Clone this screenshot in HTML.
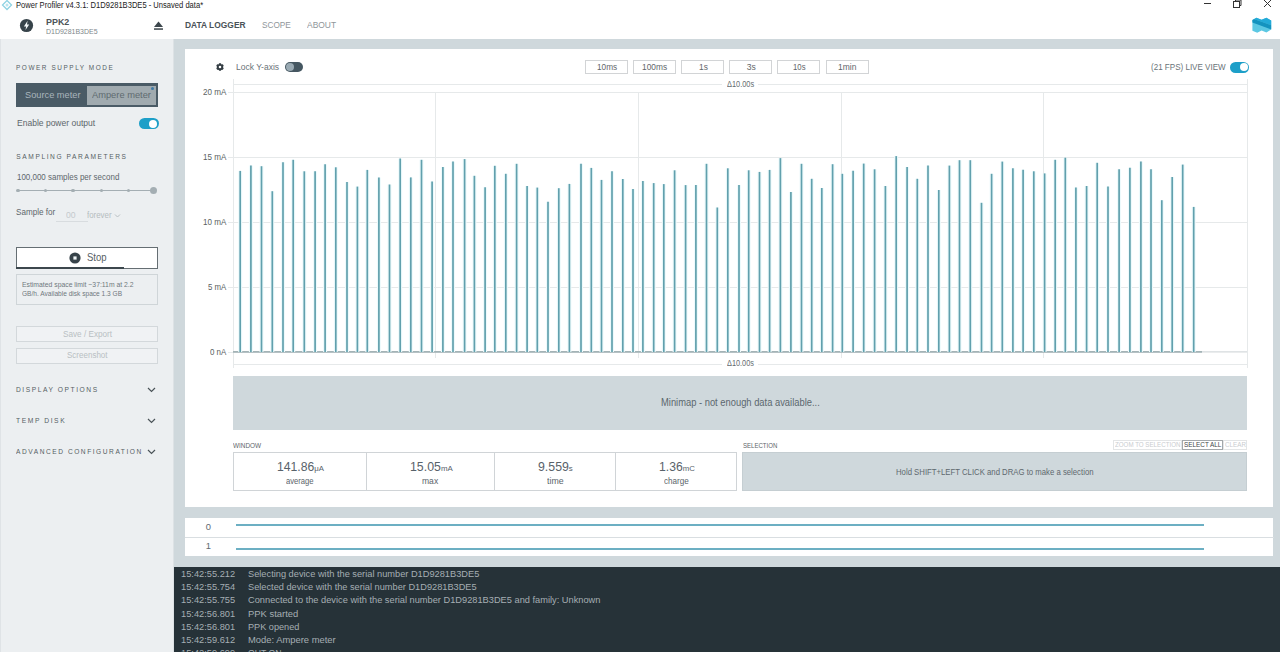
<!DOCTYPE html>
<html><head><meta charset="utf-8">
<style>
*{box-sizing:border-box;margin:0;padding:0}
html,body{width:1280px;height:652px;overflow:hidden;background:#cfd8dc;font-family:"Liberation Sans",sans-serif;position:relative}
.a{position:absolute}
.x{position:absolute;white-space:nowrap;line-height:1px;height:1px;transform-origin:0 0}
.x small{font-size:64%}
#hdr{left:0;top:0;width:1280px;height:39px;background:#fff}
#side{left:0;top:39px;width:174px;height:613px;background:#eceff1;border-left:1px solid #dfe3e6;border-right:1px solid #dde2e5}
#card{left:185px;top:49px;width:1088px;height:458px;background:#fff}
#dig{left:185px;top:518px;width:1088px;height:38px;background:#fff}
#log{left:174px;top:567px;width:1106px;height:85px;background:#263238}
.tb{position:absolute;height:13.5px;width:43px;border:1px solid #d2d4d6}
.stat{position:absolute;top:452px;height:39px;border:1px solid #d0d4d7}
</style></head><body>
<!-- header -->
<div id="hdr" class="a"></div>
<svg class="a" style="left:1px;top:0" width="12" height="11" viewBox="0 0 12 11"><path d="M6 0.5 L10.5 5 L6 9.5 L1.5 5 Z" fill="none" stroke="#8fd3e3" stroke-width="1.3"/><circle cx="6" cy="5" r="1.5" fill="#b9e4ee"/></svg>
<svg class="a" style="left:1200px;top:0" width="80" height="10"><line x1="4" y1="3.5" x2="11" y2="3.5" stroke="#333" stroke-width="1"/><rect x="33.5" y="1.5" width="6" height="6" fill="none" stroke="#333" stroke-width="1"/><path d="M35.5 1.5 V0 H41 V5.5 H39.5" fill="none" stroke="#333" stroke-width="1"/><path d="M64 0 L71 7 M71 0 L64 7" stroke="#333" stroke-width="1"/></svg>
<svg class="a" style="left:18.65px;top:17.6px" width="15" height="15" viewBox="0 0 15 15"><circle cx="7.5" cy="7.5" r="6.6" fill="#37434a"/><path d="M8.6 2.8 L4.9 8.4 H7.1 L6.5 12.1 L10.2 6.6 H8 Z" fill="#f4f8f9"/></svg>
<svg class="a" style="left:153px;top:20px" width="11" height="11" viewBox="0 0 11 11"><path d="M5.5 1.5 L10 7 H1 Z" fill="#3c464c"/><rect x="1" y="8.3" width="9" height="1.5" fill="#3c464c"/></svg>
<svg class="a" style="left:1248px;top:12px" width="28" height="26" viewBox="0 0 28 26"><defs><clipPath id="nl"><path d="M4.4 8 L8.4 5.8 L13.6 7.8 L18.4 5.8 L23.2 8.6 V17.6 L18.4 20.4 L13.6 18.4 L9.2 20.8 L4.4 18.8 Z"/></clipPath></defs><g clip-path="url(#nl)"><rect x="0" y="0" width="28" height="26" fill="#5cc8e3"/><path d="M0 0 H28 V14.8 L4.4 6.6 H0 Z" fill="#23aad8"/><path d="M0 6.6 L4.4 6.6 L28 14.8 V19.4 L4.4 10.4 H0 Z" fill="#1493bf"/></g></svg>

<!-- sidebar -->
<div id="side" class="a"></div>
<div class="a" style="left:16px;top:83px;width:142px;height:24px;background:#4a5b66"></div>
<div class="a" style="left:87px;top:86px;width:68.5px;height:18.6px;background:#a0aaaf"></div>
<div class="a" style="left:151px;top:87px;width:3px;height:3px;border-radius:50%;background:#3f7aa6"></div>
<div class="a" style="left:139px;top:118px;width:19.5px;height:11px;border-radius:6px;background:#1d9fc8"></div>
<div class="a" style="left:148.5px;top:119.5px;width:8px;height:8px;border-radius:50%;background:#fff"></div>
<div class="a" style="left:18px;top:189.5px;width:136px;height:1.2px;background:#a4aeb3"></div>
<div class="a" style="left:16.3px;top:188.6px;width:3.4px;height:3.4px;border-radius:50%;background:#a4aeb3"></div>
<div class="a" style="left:43.8px;top:188.6px;width:3.4px;height:3.4px;border-radius:50%;background:#a4aeb3"></div>
<div class="a" style="left:71.4px;top:188.6px;width:3.4px;height:3.4px;border-radius:50%;background:#a4aeb3"></div>
<div class="a" style="left:99.5px;top:188.6px;width:3.4px;height:3.4px;border-radius:50%;background:#a4aeb3"></div>
<div class="a" style="left:126.9px;top:188.6px;width:3.4px;height:3.4px;border-radius:50%;background:#a4aeb3"></div>
<div class="a" style="left:150.4px;top:186.9px;width:7px;height:7px;border-radius:50%;background:#a4aeb3"></div>
<div class="a" style="left:56px;top:221px;width:32px;height:1px;background:#d8dcdf"></div>
<svg class="a" style="left:114px;top:213px" width="7" height="6"><path d="M1 1.5 L3.5 4 L6 1.5" fill="none" stroke="#b9c0c4" stroke-width="1"/></svg>
<div class="a" style="left:16px;top:247px;width:142px;height:22px;background:#fff;border:1px solid #656e73"></div>
<div class="a" style="left:16px;top:266.5px;width:108px;height:2px;background:#3c474d"></div>
<svg class="a" style="left:69px;top:252px" width="12" height="12"><circle cx="6" cy="6" r="5.6" fill="#37434a"/><rect x="4.4" y="4.4" width="3.2" height="3.2" fill="#f0f6f7"/></svg>
<div class="a" style="left:16px;top:274px;width:142px;height:31px;border:1px solid #cfd5d8"></div>
<div class="a" style="left:16px;top:326px;width:142px;height:16px;border:1px solid #d3d8db;background:#f0f2f4"></div>
<div class="a" style="left:16px;top:348px;width:142px;height:16px;border:1px solid #d3d8db;background:#f0f2f4"></div>
<svg class="a" style="left:147px;top:387px" width="9" height="6"><path d="M1 1 L4.5 4.5 L8 1" fill="none" stroke="#4a5358" stroke-width="1.2"/></svg>
<svg class="a" style="left:147px;top:418px" width="9" height="6"><path d="M1 1 L4.5 4.5 L8 1" fill="none" stroke="#4a5358" stroke-width="1.2"/></svg>
<svg class="a" style="left:147px;top:449px" width="9" height="6"><path d="M1 1 L4.5 4.5 L8 1" fill="none" stroke="#4a5358" stroke-width="1.2"/></svg>

<!-- main card -->
<div id="card" class="a"></div>
<svg class="a" style="left:210.2px;top:57.1px" width="20" height="20" viewBox="0 0 20 20"><path fill="#333d43" fill-rule="evenodd" d="M8.46 7.54 L9.12 6.20 L10.88 6.20 L11.54 7.54 L11.36 7.44 L12.85 7.34 L13.73 8.86 L12.90 10.10 L12.90 9.90 L13.73 11.14 L12.85 12.66 L11.36 12.56 L11.54 12.46 L10.88 13.80 L9.12 13.80 L8.46 12.46 L8.64 12.56 L7.15 12.66 L6.27 11.14 L7.10 9.90 L7.10 10.10 L6.27 8.86 L7.15 7.34 L8.64 7.44 Z M11.30 10 A1.3 1.3 0 1 0 8.70 10 A1.3 1.3 0 1 0 11.30 10 Z"/></svg>
<div class="a" style="left:284.5px;top:62px;width:18.5px;height:10px;border-radius:5px;background:#455761"></div>
<div class="a" style="left:285.5px;top:63px;width:8px;height:8px;border-radius:50%;background:#9aaab3"></div>
<div class="tb" style="left:584.5px;top:60px"></div>
<div class="tb" style="left:632.8px;top:60px"></div>
<div class="tb" style="left:681px;top:60px"></div>
<div class="tb" style="left:729.2px;top:60px"></div>
<div class="tb" style="left:777.4px;top:60px"></div>
<div class="tb" style="left:825.6px;top:60px"></div>
<div class="a" style="left:1229.5px;top:61.5px;width:19px;height:11px;border-radius:6px;background:#1d9fc8"></div>
<div class="a" style="left:1239.5px;top:63px;width:8px;height:8px;border-radius:50%;background:#fff"></div>

<svg class="a" style="left:0;top:0" width="1280" height="652">
 <g stroke="#e6e9ea" stroke-width="1" shape-rendering="crispEdges">
  <line x1="233" y1="84.5" x2="722" y2="84.5"/><line x1="758" y1="84.5" x2="1247" y2="84.5"/>
  <line x1="233" y1="92.5" x2="1247" y2="92.5"/>
  <line x1="233" y1="157.5" x2="1247" y2="157.5"/>
  <line x1="233" y1="222.5" x2="1247" y2="222.5"/>
  <line x1="233" y1="287.5" x2="1247" y2="287.5"/>
  <line x1="233" y1="364.5" x2="722" y2="364.5"/><line x1="758" y1="364.5" x2="1247" y2="364.5"/>
  <line x1="435.5" y1="92" x2="435.5" y2="358"/>
  <line x1="638.5" y1="92" x2="638.5" y2="358"/>
  <line x1="841.5" y1="92" x2="841.5" y2="358"/>
  <line x1="1043.5" y1="92" x2="1043.5" y2="358"/>
  <line x1="1247.5" y1="79" x2="1247.5" y2="368"/>
  <line x1="233.5" y1="79" x2="233.5" y2="368"/>
  <line x1="228" y1="92.5" x2="233" y2="92.5"/>
  <line x1="228" y1="157.5" x2="233" y2="157.5"/>
  <line x1="228" y1="222.5" x2="233" y2="222.5"/>
  <line x1="228" y1="287.5" x2="233" y2="287.5"/>
  <line x1="228" y1="352.5" x2="233" y2="352.5"/>
 </g>
 <line x1="233" y1="351.9" x2="1247" y2="351.9" stroke="#d5dadc" stroke-width="1.2"/>
 <line x1="233" y1="351.9" x2="1202" y2="351.9" stroke="#a3b3b6" stroke-width="1.6"/>
 <g stroke="#edfafc" stroke-width="4"><line x1="240.2" y1="352" x2="240.2" y2="170.9"/><line x1="250.9" y1="352" x2="250.9" y2="165.6"/><line x1="261.5" y1="352" x2="261.5" y2="166.2"/><line x1="272.3" y1="352" x2="272.3" y2="191.2"/><line x1="283.0" y1="352" x2="283.0" y2="162.2"/><line x1="293.2" y1="352" x2="293.2" y2="159.8"/><line x1="304.3" y1="352" x2="304.3" y2="171.3"/><line x1="315.1" y1="352" x2="315.1" y2="171.3"/><line x1="325.1" y1="352" x2="325.1" y2="164.2"/><line x1="335.8" y1="352" x2="335.8" y2="167.3"/><line x1="347.0" y1="352" x2="347.0" y2="182.1"/><line x1="357.4" y1="352" x2="357.4" y2="186.6"/><line x1="367.3" y1="352" x2="367.3" y2="169.9"/><line x1="378.9" y1="352" x2="378.9" y2="177.4"/><line x1="389.5" y1="352" x2="389.5" y2="184.5"/><line x1="400.2" y1="352" x2="400.2" y2="158.5"/><line x1="410.8" y1="352" x2="410.8" y2="177.4"/><line x1="421.5" y1="352" x2="421.5" y2="159.8"/><line x1="432.1" y1="352" x2="432.1" y2="181.5"/><line x1="442.9" y1="352" x2="442.9" y2="166.9"/><line x1="453.0" y1="352" x2="453.0" y2="161.6"/><line x1="464.6" y1="352" x2="464.6" y2="159.1"/><line x1="474.4" y1="352" x2="474.4" y2="175.8"/><line x1="485.1" y1="352" x2="485.1" y2="187.2"/><line x1="494.8" y1="352" x2="494.8" y2="165.8"/><line x1="505.8" y1="352" x2="505.8" y2="173.8"/><line x1="516.6" y1="352" x2="516.6" y2="163.8"/><line x1="527.1" y1="352" x2="527.1" y2="186.0"/><line x1="537.3" y1="352" x2="537.3" y2="187.6"/><line x1="548.0" y1="352" x2="548.0" y2="201.8"/><line x1="558.8" y1="352" x2="558.8" y2="188.2"/><line x1="569.4" y1="352" x2="569.4" y2="183.9"/><line x1="581.0" y1="352" x2="581.0" y2="163.8"/><line x1="591.3" y1="352" x2="591.3" y2="167.9"/><line x1="601.5" y1="352" x2="601.5" y2="179.9"/><line x1="612.0" y1="352" x2="612.0" y2="171.3"/><line x1="622.8" y1="352" x2="622.8" y2="179.0"/><line x1="633.0" y1="352" x2="633.0" y2="189.0"/><line x1="642.9" y1="352" x2="642.9" y2="180.9"/><line x1="653.7" y1="352" x2="653.7" y2="183.1"/><line x1="663.8" y1="352" x2="663.8" y2="184.1"/><line x1="674.6" y1="352" x2="674.6" y2="170.3"/><line x1="685.6" y1="352" x2="685.6" y2="185.1"/><line x1="695.9" y1="352" x2="695.9" y2="184.9"/><line x1="706.5" y1="352" x2="706.5" y2="163.8"/><line x1="717.3" y1="352" x2="717.3" y2="207.5"/><line x1="727.8" y1="352" x2="727.8" y2="168.3"/><line x1="739.0" y1="352" x2="739.0" y2="185.1"/><line x1="748.7" y1="352" x2="748.7" y2="170.3"/><line x1="759.5" y1="352" x2="759.5" y2="171.9"/><line x1="769.6" y1="352" x2="769.6" y2="169.9"/><line x1="780.4" y1="352" x2="780.4" y2="158.1"/><line x1="790.9" y1="352" x2="790.9" y2="192.0"/><line x1="801.5" y1="352" x2="801.5" y2="163.8"/><line x1="811.7" y1="352" x2="811.7" y2="178.8"/><line x1="821.8" y1="352" x2="821.8" y2="188.0"/><line x1="832.6" y1="352" x2="832.6" y2="164.2"/><line x1="842.3" y1="352" x2="842.3" y2="173.8"/><line x1="853.1" y1="352" x2="853.1" y2="170.7"/><line x1="863.7" y1="352" x2="863.7" y2="163.6"/><line x1="874.6" y1="352" x2="874.6" y2="169.3"/><line x1="885.4" y1="352" x2="885.4" y2="186.0"/><line x1="896.2" y1="352" x2="896.2" y2="156.1"/><line x1="907.1" y1="352" x2="907.1" y2="166.9"/><line x1="917.3" y1="352" x2="917.3" y2="178.8"/><line x1="928.0" y1="352" x2="928.0" y2="165.6"/><line x1="938.8" y1="352" x2="938.8" y2="190.0"/><line x1="949.4" y1="352" x2="949.4" y2="165.6"/><line x1="959.5" y1="352" x2="959.5" y2="160.2"/><line x1="970.3" y1="352" x2="970.3" y2="160.2"/><line x1="981.5" y1="352" x2="981.5" y2="202.8"/><line x1="991.6" y1="352" x2="991.6" y2="173.8"/><line x1="1002.3" y1="352" x2="1002.3" y2="161.6"/><line x1="1012.9" y1="352" x2="1012.9" y2="168.3"/><line x1="1023.1" y1="352" x2="1023.1" y2="169.7"/><line x1="1033.8" y1="352" x2="1033.8" y2="171.3"/><line x1="1044.6" y1="352" x2="1044.6" y2="173.4"/><line x1="1055.2" y1="352" x2="1055.2" y2="159.8"/><line x1="1065.3" y1="352" x2="1065.3" y2="157.7"/><line x1="1075.9" y1="352" x2="1075.9" y2="187.6"/><line x1="1086.6" y1="352" x2="1086.6" y2="186.0"/><line x1="1097.2" y1="352" x2="1097.2" y2="162.8"/><line x1="1108.0" y1="352" x2="1108.0" y2="186.6"/><line x1="1119.1" y1="352" x2="1119.1" y2="169.3"/><line x1="1129.9" y1="352" x2="1129.9" y2="167.7"/><line x1="1140.9" y1="352" x2="1140.9" y2="161.6"/><line x1="1151.0" y1="352" x2="1151.0" y2="169.3"/><line x1="1161.8" y1="352" x2="1161.8" y2="200.2"/><line x1="1172.2" y1="352" x2="1172.2" y2="177.0"/><line x1="1182.7" y1="352" x2="1182.7" y2="164.6"/><line x1="1193.7" y1="352" x2="1193.7" y2="206.9"/></g>
 <g stroke="#61a0ad" stroke-width="1.7"><line x1="240.2" y1="352" x2="240.2" y2="170.9"/><line x1="250.9" y1="352" x2="250.9" y2="165.6"/><line x1="261.5" y1="352" x2="261.5" y2="166.2"/><line x1="272.3" y1="352" x2="272.3" y2="191.2"/><line x1="283.0" y1="352" x2="283.0" y2="162.2"/><line x1="293.2" y1="352" x2="293.2" y2="159.8"/><line x1="304.3" y1="352" x2="304.3" y2="171.3"/><line x1="315.1" y1="352" x2="315.1" y2="171.3"/><line x1="325.1" y1="352" x2="325.1" y2="164.2"/><line x1="335.8" y1="352" x2="335.8" y2="167.3"/><line x1="347.0" y1="352" x2="347.0" y2="182.1"/><line x1="357.4" y1="352" x2="357.4" y2="186.6"/><line x1="367.3" y1="352" x2="367.3" y2="169.9"/><line x1="378.9" y1="352" x2="378.9" y2="177.4"/><line x1="389.5" y1="352" x2="389.5" y2="184.5"/><line x1="400.2" y1="352" x2="400.2" y2="158.5"/><line x1="410.8" y1="352" x2="410.8" y2="177.4"/><line x1="421.5" y1="352" x2="421.5" y2="159.8"/><line x1="432.1" y1="352" x2="432.1" y2="181.5"/><line x1="442.9" y1="352" x2="442.9" y2="166.9"/><line x1="453.0" y1="352" x2="453.0" y2="161.6"/><line x1="464.6" y1="352" x2="464.6" y2="159.1"/><line x1="474.4" y1="352" x2="474.4" y2="175.8"/><line x1="485.1" y1="352" x2="485.1" y2="187.2"/><line x1="494.8" y1="352" x2="494.8" y2="165.8"/><line x1="505.8" y1="352" x2="505.8" y2="173.8"/><line x1="516.6" y1="352" x2="516.6" y2="163.8"/><line x1="527.1" y1="352" x2="527.1" y2="186.0"/><line x1="537.3" y1="352" x2="537.3" y2="187.6"/><line x1="548.0" y1="352" x2="548.0" y2="201.8"/><line x1="558.8" y1="352" x2="558.8" y2="188.2"/><line x1="569.4" y1="352" x2="569.4" y2="183.9"/><line x1="581.0" y1="352" x2="581.0" y2="163.8"/><line x1="591.3" y1="352" x2="591.3" y2="167.9"/><line x1="601.5" y1="352" x2="601.5" y2="179.9"/><line x1="612.0" y1="352" x2="612.0" y2="171.3"/><line x1="622.8" y1="352" x2="622.8" y2="179.0"/><line x1="633.0" y1="352" x2="633.0" y2="189.0"/><line x1="642.9" y1="352" x2="642.9" y2="180.9"/><line x1="653.7" y1="352" x2="653.7" y2="183.1"/><line x1="663.8" y1="352" x2="663.8" y2="184.1"/><line x1="674.6" y1="352" x2="674.6" y2="170.3"/><line x1="685.6" y1="352" x2="685.6" y2="185.1"/><line x1="695.9" y1="352" x2="695.9" y2="184.9"/><line x1="706.5" y1="352" x2="706.5" y2="163.8"/><line x1="717.3" y1="352" x2="717.3" y2="207.5"/><line x1="727.8" y1="352" x2="727.8" y2="168.3"/><line x1="739.0" y1="352" x2="739.0" y2="185.1"/><line x1="748.7" y1="352" x2="748.7" y2="170.3"/><line x1="759.5" y1="352" x2="759.5" y2="171.9"/><line x1="769.6" y1="352" x2="769.6" y2="169.9"/><line x1="780.4" y1="352" x2="780.4" y2="158.1"/><line x1="790.9" y1="352" x2="790.9" y2="192.0"/><line x1="801.5" y1="352" x2="801.5" y2="163.8"/><line x1="811.7" y1="352" x2="811.7" y2="178.8"/><line x1="821.8" y1="352" x2="821.8" y2="188.0"/><line x1="832.6" y1="352" x2="832.6" y2="164.2"/><line x1="842.3" y1="352" x2="842.3" y2="173.8"/><line x1="853.1" y1="352" x2="853.1" y2="170.7"/><line x1="863.7" y1="352" x2="863.7" y2="163.6"/><line x1="874.6" y1="352" x2="874.6" y2="169.3"/><line x1="885.4" y1="352" x2="885.4" y2="186.0"/><line x1="896.2" y1="352" x2="896.2" y2="156.1"/><line x1="907.1" y1="352" x2="907.1" y2="166.9"/><line x1="917.3" y1="352" x2="917.3" y2="178.8"/><line x1="928.0" y1="352" x2="928.0" y2="165.6"/><line x1="938.8" y1="352" x2="938.8" y2="190.0"/><line x1="949.4" y1="352" x2="949.4" y2="165.6"/><line x1="959.5" y1="352" x2="959.5" y2="160.2"/><line x1="970.3" y1="352" x2="970.3" y2="160.2"/><line x1="981.5" y1="352" x2="981.5" y2="202.8"/><line x1="991.6" y1="352" x2="991.6" y2="173.8"/><line x1="1002.3" y1="352" x2="1002.3" y2="161.6"/><line x1="1012.9" y1="352" x2="1012.9" y2="168.3"/><line x1="1023.1" y1="352" x2="1023.1" y2="169.7"/><line x1="1033.8" y1="352" x2="1033.8" y2="171.3"/><line x1="1044.6" y1="352" x2="1044.6" y2="173.4"/><line x1="1055.2" y1="352" x2="1055.2" y2="159.8"/><line x1="1065.3" y1="352" x2="1065.3" y2="157.7"/><line x1="1075.9" y1="352" x2="1075.9" y2="187.6"/><line x1="1086.6" y1="352" x2="1086.6" y2="186.0"/><line x1="1097.2" y1="352" x2="1097.2" y2="162.8"/><line x1="1108.0" y1="352" x2="1108.0" y2="186.6"/><line x1="1119.1" y1="352" x2="1119.1" y2="169.3"/><line x1="1129.9" y1="352" x2="1129.9" y2="167.7"/><line x1="1140.9" y1="352" x2="1140.9" y2="161.6"/><line x1="1151.0" y1="352" x2="1151.0" y2="169.3"/><line x1="1161.8" y1="352" x2="1161.8" y2="200.2"/><line x1="1172.2" y1="352" x2="1172.2" y2="177.0"/><line x1="1182.7" y1="352" x2="1182.7" y2="164.6"/><line x1="1193.7" y1="352" x2="1193.7" y2="206.9"/></g>
</svg>

<div class="a" style="left:233px;top:376px;width:1014px;height:54px;background:#cfd8dc"></div>
<div class="stat" style="left:233px;width:134px"></div>
<div class="stat" style="left:366px;width:129px"></div>
<div class="stat" style="left:494px;width:122px"></div>
<div class="stat" style="left:615px;width:122px"></div>
<div class="a" style="left:742px;top:452px;width:505px;height:39px;background:#cfd8dc;border:1px solid #c5ced2"></div>
<div class="a" style="left:1113px;top:440px;width:69px;height:10px;border:1px solid #e3e5e6"></div>
<div class="a" style="left:1182px;top:440px;width:41px;height:10px;border:1px solid #a3a7aa"></div>
<div class="a" style="left:1223px;top:440px;width:24px;height:10px;border:1px solid #e3e5e6"></div>

<!-- digital -->
<div id="dig" class="a"></div>
<div class="a" style="left:185px;top:536.5px;width:1089px;height:1px;background:#d9dee1"></div>
<div class="a" style="left:236px;top:524px;width:968px;height:1.5px;background:#6cafc3"></div>
<div class="a" style="left:236px;top:548.3px;width:968px;height:1.5px;background:#6cafc3"></div>

<!-- log -->
<div id="log" class="a"></div>
<div class="x" id="t0" style="left:16.00px;top:5.15px;font-size:8.5px;color:#222;transform:scaleX(0.8919);">Power Profiler v4.3.1: D1D9281B3DE5 - Unsaved data*</div>
<div class="x" id="t1" style="left:46.00px;top:21.02px;font-size:9.6px;color:#4d5459;font-weight:bold;transform:scaleX(0.9295);">PPK2</div>
<div class="x" id="t2" style="left:46.00px;top:31.13px;font-size:8.0px;color:#80878b;transform:scaleX(0.8717);">D1D9281B3DE5</div>
<div class="x" id="t3" style="left:185.20px;top:24.24px;font-size:9.4px;color:#4a5257;font-weight:bold;transform:scaleX(0.8968);">DATA LOGGER</div>
<div class="x" id="t4" style="left:261.70px;top:24.24px;font-size:9.4px;color:#8f969a;transform:scaleX(0.8788);">SCOPE</div>
<div class="x" id="t5" style="left:307.00px;top:24.24px;font-size:9.4px;color:#8f969a;transform:scaleX(0.8999);">ABOUT</div>
<div class="x" id="t6" style="left:16.40px;top:67.01px;font-size:6.6px;color:#555e63;letter-spacing:1.6px;transform:scaleX(0.9744);">POWER SUPPLY MODE</div>
<div class="x" id="t7" style="left:25.20px;top:93.90px;font-size:9.8px;color:#a9b5bc;transform:scaleX(0.9440);">Source meter</div>
<div class="x" id="t8" style="left:92.00px;top:93.90px;font-size:9.8px;color:#5f6a70;transform:scaleX(0.9491);">Ampere meter</div>
<div class="x" id="t9" style="left:16.60px;top:122.89px;font-size:8.7px;color:#5d666b;transform:scaleX(0.9807);">Enable power output</div>
<div class="x" id="t10" style="left:16.30px;top:155.81px;font-size:6.6px;color:#555e63;letter-spacing:1.6px;">SAMPLING PARAMETERS</div>
<div class="x" id="t11" style="left:16.60px;top:177.29px;font-size:8.7px;color:#5d666b;transform:scaleX(0.9171);">100,000 samples per second</div>
<div class="x" id="t12" style="left:16.30px;top:211.85px;font-size:8.5px;color:#5d666b;transform:scaleX(0.9545);">Sample for</div>
<div class="x" id="t13" style="left:66.00px;top:215.06px;font-size:8.2px;color:#c5cacd;transform:scaleX(1.0511);">00</div>
<div class="x" id="t14" style="left:87.00px;top:214.95px;font-size:8.5px;color:#b5bcc0;transform:scaleX(0.9266);">forever</div>
<div class="x" id="t15" style="left:87.00px;top:257.47px;font-size:10.2px;color:#555e63;transform:scaleX(0.9365);">Stop</div>
<div class="x" id="t16" style="left:22.40px;top:284.31px;font-size:6.9px;color:#6f787d;transform:scaleX(0.9901);">Estimated space limit ~37:11m at 2.2</div>
<div class="x" id="t17" style="left:22.40px;top:293.11px;font-size:6.9px;color:#6f787d;transform:scaleX(0.9543);">GB/h. Available disk space 1.3 GB</div>
<div class="x" id="t18" style="left:62.50px;top:333.55px;font-size:8.5px;color:#b9bfc3;transform:scaleX(0.9611);">Save / Export</div>
<div class="x" id="t19" style="left:67.00px;top:355.25px;font-size:8.5px;color:#b9bfc3;transform:scaleX(0.9427);">Screenshot</div>
<div class="x" id="t20" style="left:16.40px;top:388.73px;font-size:6.85px;color:#555e63;letter-spacing:1.6px;transform:scaleX(0.9731);">DISPLAY OPTIONS</div>
<div class="x" id="t21" style="left:16.20px;top:419.93px;font-size:6.85px;color:#555e63;letter-spacing:1.6px;transform:scaleX(0.9814);">TEMP DISK</div>
<div class="x" id="t22" style="left:16.20px;top:450.93px;font-size:6.85px;color:#555e63;letter-spacing:1.6px;transform:scaleX(0.9639);">ADVANCED CONFIGURATION</div>
<div class="x" id="t23" style="left:236.40px;top:66.78px;font-size:9.0px;color:#6a7378;transform:scaleX(0.9459);">Lock Y-axis</div>
<div class="x" id="t24" style="left:596.70px;top:66.52px;font-size:8.6px;color:#5f666a;transform:scaleX(0.9588);">10ms</div>
<div class="x" id="t25" style="left:642.30px;top:66.52px;font-size:8.6px;color:#5f666a;transform:scaleX(0.9713);">100ms</div>
<div class="x" id="t26" style="left:698.60px;top:66.52px;font-size:8.6px;color:#5f666a;transform:scaleX(0.9759);">1s</div>
<div class="x" id="t27" style="left:746.70px;top:66.52px;font-size:8.6px;color:#5f666a;">3s</div>
<div class="x" id="t28" style="left:793.20px;top:66.52px;font-size:8.6px;color:#5f666a;transform:scaleX(0.9032);">10s</div>
<div class="x" id="t29" style="left:838.30px;top:66.52px;font-size:8.6px;color:#5f666a;transform:scaleX(0.9852);">1min</div>
<div class="x" id="t30" style="left:1150.60px;top:66.88px;font-size:9.0px;color:#6a7378;transform:scaleX(0.8935);">(21 FPS) LIVE VIEW</div>
<div class="x" id="t31" style="left:202.50px;top:92.45px;font-size:8.8px;color:#5a5f62;transform:scaleX(0.9175);">20 mA</div>
<div class="x" id="t32" style="left:202.50px;top:157.45px;font-size:8.8px;color:#5a5f62;transform:scaleX(0.9175);">15 mA</div>
<div class="x" id="t33" style="left:202.50px;top:222.45px;font-size:8.8px;color:#5a5f62;transform:scaleX(0.9175);">10 mA</div>
<div class="x" id="t34" style="left:207.50px;top:287.45px;font-size:8.8px;color:#5a5f62;transform:scaleX(0.8918);">5 mA</div>
<div class="x" id="t35" style="left:209.50px;top:352.45px;font-size:8.8px;color:#5a5f62;transform:scaleX(0.9017);">0 nA</div>
<div class="x" id="t36" style="left:726.80px;top:83.72px;font-size:8.6px;color:#666c70;transform:scaleX(0.8588);">&Delta;10.00s</div>
<div class="x" id="t37" style="left:726.60px;top:363.22px;font-size:8.6px;color:#666c70;transform:scaleX(0.8523);">&Delta;10.00s</div>
<div class="x" id="t38" style="left:660.60px;top:402.36px;font-size:10.5px;color:#5b676e;transform:scaleX(0.8916);">Minimap - not enough data available...</div>
<div class="x" id="t39" style="left:232.70px;top:445.11px;font-size:6.9px;color:#5e666b;transform:scaleX(0.9303);">WINDOW</div>
<div class="x" id="t40" style="left:742.90px;top:445.11px;font-size:6.9px;color:#5e666b;transform:scaleX(0.8782);">SELECTION</div>
<div class="x" id="t41" style="left:276.70px;top:466.50px;font-size:12.4px;color:#58626a;transform:scaleX(0.9843);">141.86<small>&mu;A</small></div>
<div class="x" id="t42" style="left:286.10px;top:480.98px;font-size:9.0px;color:#5b656a;transform:scaleX(0.8487);">average</div>
<div class="x" id="t43" style="left:409.70px;top:466.50px;font-size:12.4px;color:#58626a;transform:scaleX(0.9957);">15.05<small>mA</small></div>
<div class="x" id="t44" style="left:422.00px;top:480.98px;font-size:9.0px;color:#5b656a;transform:scaleX(0.9503);">max</div>
<div class="x" id="t45" style="left:538.00px;top:466.50px;font-size:12.4px;color:#58626a;transform:scaleX(0.9954);">9.559<small>s</small></div>
<div class="x" id="t46" style="left:547.00px;top:480.98px;font-size:9.0px;color:#5b656a;transform:scaleX(0.9747);">time</div>
<div class="x" id="t47" style="left:658.75px;top:466.50px;font-size:12.4px;color:#58626a;transform:scaleX(0.9824);">1.36<small>mC</small></div>
<div class="x" id="t48" style="left:663.75px;top:480.98px;font-size:9.0px;color:#5b656a;transform:scaleX(0.9004);">charge</div>
<div class="x" id="t49" style="left:896.00px;top:472.25px;font-size:8.8px;color:#5e686e;transform:scaleX(0.8817);">Hold SHIFT+LEFT CLICK and DRAG to make a selection</div>
<div class="x" id="t50" style="left:1115.00px;top:444.45px;font-size:6.5px;color:#c9cccf;transform:scaleX(0.9515);">ZOOM TO SELECTION</div>
<div class="x" id="t51" style="left:1184.00px;top:444.45px;font-size:6.5px;color:#3f474c;transform:scaleX(0.9800);">SELECT ALL</div>
<div class="x" id="t52" style="left:1225.00px;top:444.45px;font-size:6.5px;color:#c9cccf;transform:scaleX(0.9645);">CLEAR</div>
<div class="x" id="t53" style="left:205.70px;top:526.04px;font-size:9.4px;color:#606a70;">0</div>
<div class="x" id="t54" style="left:205.70px;top:545.44px;font-size:9.4px;color:#606a70;">1</div>
<div class="x" id="t55" style="left:181.25px;top:572.87px;font-size:9.6px;color:#a5aeb3;transform:scaleX(0.9659);">15:42:55.212</div>
<div class="x" id="t56" style="left:248.00px;top:572.87px;font-size:9.6px;color:#a5aeb3;transform:scaleX(0.9639);">Selecting device with the serial number D1D9281B3DE5</div>
<div class="x" id="t57" style="left:181.25px;top:586.12px;font-size:9.6px;color:#a5aeb3;transform:scaleX(0.9659);">15:42:55.754</div>
<div class="x" id="t58" style="left:248.00px;top:586.12px;font-size:9.6px;color:#a5aeb3;transform:scaleX(0.9612);">Selected device with the serial number D1D9281B3DE5</div>
<div class="x" id="t59" style="left:181.25px;top:599.37px;font-size:9.6px;color:#a5aeb3;transform:scaleX(0.9659);">15:42:55.755</div>
<div class="x" id="t60" style="left:248.00px;top:599.37px;font-size:9.6px;color:#a5aeb3;transform:scaleX(0.9647);">Connected to the device with the serial number D1D9281B3DE5 and family: Unknown</div>
<div class="x" id="t61" style="left:181.25px;top:612.62px;font-size:9.6px;color:#a5aeb3;transform:scaleX(0.9659);">15:42:56.801</div>
<div class="x" id="t62" style="left:248.00px;top:612.62px;font-size:9.6px;color:#a5aeb3;transform:scaleX(0.9810);">PPK started</div>
<div class="x" id="t63" style="left:181.25px;top:625.87px;font-size:9.6px;color:#a5aeb3;transform:scaleX(0.9659);">15:42:56.801</div>
<div class="x" id="t64" style="left:248.00px;top:625.87px;font-size:9.6px;color:#a5aeb3;transform:scaleX(0.9521);">PPK opened</div>
<div class="x" id="t65" style="left:181.25px;top:639.12px;font-size:9.6px;color:#a5aeb3;transform:scaleX(0.9659);">15:42:59.612</div>
<div class="x" id="t66" style="left:248.00px;top:639.12px;font-size:9.6px;color:#a5aeb3;transform:scaleX(0.9792);">Mode: Ampere meter</div>
<div class="x" id="t67" style="left:181.25px;top:652.37px;font-size:9.6px;color:#a5aeb3;transform:scaleX(0.9659);">15:42:59.699</div>
<div class="x" id="t68" style="left:248.00px;top:652.37px;font-size:9.6px;color:#a5aeb3;transform:scaleX(0.9041);">OUT ON</div>
</body></html>
